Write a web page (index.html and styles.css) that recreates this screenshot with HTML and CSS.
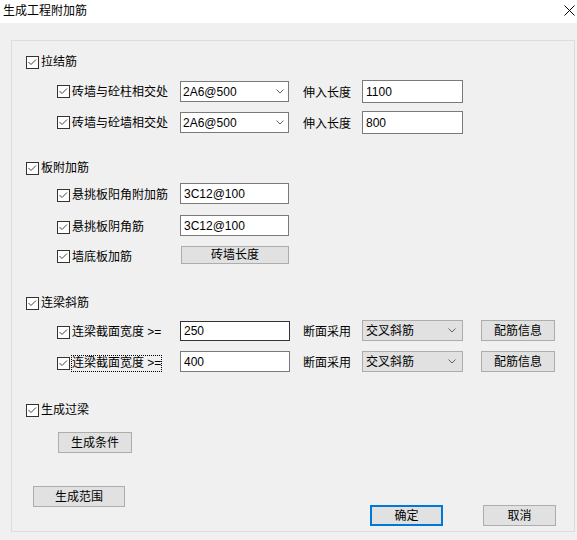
FILE: index.html
```html
<!DOCTYPE html>
<html lang="zh">
<head>
<meta charset="utf-8">
<title>生成工程附加筋</title>
<link rel="stylesheet" href="styles.css">
</head>
<body>
<div class="titlebar">
  <span class="title">生成工程附加筋</span>
  <svg class="close" width="11" height="11" viewBox="0 0 11 11"><path d="M0.5 0.5 L10.5 10.5 M10.5 0.5 L0.5 10.5" stroke="#000" stroke-width="1" fill="none"/></svg>
</div>
<div class="group">
  <div class="row l1 r-a">
    <label class="chk"><svg class="cb" width="13" height="13" viewBox="0 0 13 13"><rect x="0.5" y="0.5" width="12" height="12" fill="#fff" stroke="#333"/><path d="M2.5 6 L5 8.5 L10 3.5" fill="none" stroke="#444"/></svg>拉结筋</label>
  </div>
  <div class="row l2 r-b1 h23">
    <label class="chk col"><svg class="cb" width="13" height="13" viewBox="0 0 13 13"><rect x="0.5" y="0.5" width="12" height="12" fill="#fff" stroke="#333"/><path d="M2.5 6 L5 8.5 L10 3.5" fill="none" stroke="#444"/></svg>砖墙与砼柱相交处</label>
    <div class="combo edit w109"><span>2A6@500</span><svg class="chev" width="8" height="5" viewBox="0 0 8 5"><path d="M0.5 0.5 L4 4 L7.5 0.5" fill="none" stroke="#606060"/></svg></div>
    <span class="mid mid-b">伸入长度</span>
    <div class="input w101 tall">1100</div>
  </div>
  <div class="row l2 r-b2 h23">
    <label class="chk col"><svg class="cb" width="13" height="13" viewBox="0 0 13 13"><rect x="0.5" y="0.5" width="12" height="12" fill="#fff" stroke="#333"/><path d="M2.5 6 L5 8.5 L10 3.5" fill="none" stroke="#444"/></svg>砖墙与砼墙相交处</label>
    <div class="combo edit w109"><span>2A6@500</span><svg class="chev" width="8" height="5" viewBox="0 0 8 5"><path d="M0.5 0.5 L4 4 L7.5 0.5" fill="none" stroke="#606060"/></svg></div>
    <span class="mid mid-b">伸入长度</span>
    <div class="input w101 tall">800</div>
  </div>

  <div class="row l1 r-c">
    <label class="chk"><svg class="cb" width="13" height="13" viewBox="0 0 13 13"><rect x="0.5" y="0.5" width="12" height="12" fill="#fff" stroke="#333"/><path d="M2.5 6 L5 8.5 L10 3.5" fill="none" stroke="#444"/></svg>板附加筋</label>
  </div>
  <div class="row l2 r-d1 h21">
    <label class="chk col low"><svg class="cb" width="13" height="13" viewBox="0 0 13 13"><rect x="0.5" y="0.5" width="12" height="12" fill="#fff" stroke="#333"/><path d="M2.5 6 L5 8.5 L10 3.5" fill="none" stroke="#444"/></svg>悬挑板阳角附加筋</label>
    <div class="input w109">3C12@100</div>
  </div>
  <div class="row l2 r-d2 h21">
    <label class="chk col low"><svg class="cb" width="13" height="13" viewBox="0 0 13 13"><rect x="0.5" y="0.5" width="12" height="12" fill="#fff" stroke="#333"/><path d="M2.5 6 L5 8.5 L10 3.5" fill="none" stroke="#444"/></svg>悬挑板阴角筋</label>
    <div class="input w109">3C12@100</div>
  </div>
  <div class="row l2 r-d3 h18">
    <label class="chk col low"><svg class="cb" width="13" height="13" viewBox="0 0 13 13"><rect x="0.5" y="0.5" width="12" height="12" fill="#fff" stroke="#333"/><path d="M2.5 6 L5 8.5 L10 3.5" fill="none" stroke="#444"/></svg>墙底板加筋</label>
    <button class="btn wall-btn">砖墙长度</button>
  </div>

  <div class="row l1 r-e">
    <label class="chk"><svg class="cb" width="13" height="13" viewBox="0 0 13 13"><rect x="0.5" y="0.5" width="12" height="12" fill="#fff" stroke="#333"/><path d="M2.5 6 L5 8.5 L10 3.5" fill="none" stroke="#444"/></svg>连梁斜筋</label>
  </div>
  <div class="row l2 r-f1 h21">
    <label class="chk col low"><svg class="cb" width="13" height="13" viewBox="0 0 13 13"><rect x="0.5" y="0.5" width="12" height="12" fill="#fff" stroke="#333"/><path d="M2.5 6 L5 8.5 L10 3.5" fill="none" stroke="#444"/></svg><span>连梁截面宽度 &gt;=</span></label>
    <div class="input w110 hot">250</div>
    <span class="mid mid-f">断面采用</span>
    <div class="combo list w101"><span>交叉斜筋</span><svg class="chev" width="8" height="5" viewBox="0 0 8 5"><path d="M0.5 0.5 L4 4 L7.5 0.5" fill="none" stroke="#606060"/></svg></div>
    <button class="btn info-btn">配筋信息</button>
  </div>
  <div class="row l2 r-f2 h21">
    <label class="chk col low"><svg class="cb" width="13" height="13" viewBox="0 0 13 13"><rect x="0.5" y="0.5" width="12" height="12" fill="#fff" stroke="#333"/><path d="M2.5 6 L5 8.5 L10 3.5" fill="none" stroke="#444"/></svg><span class="focus">连梁截面宽度 &gt;=</span></label>
    <div class="input w110">400</div>
    <span class="mid mid-f">断面采用</span>
    <div class="combo list w101"><span>交叉斜筋</span><svg class="chev" width="8" height="5" viewBox="0 0 8 5"><path d="M0.5 0.5 L4 4 L7.5 0.5" fill="none" stroke="#606060"/></svg></div>
    <button class="btn info-btn">配筋信息</button>
  </div>

  <div class="row l1 r-g">
    <label class="chk"><svg class="cb" width="13" height="13" viewBox="0 0 13 13"><rect x="0.5" y="0.5" width="12" height="12" fill="#fff" stroke="#333"/><path d="M2.5 6 L5 8.5 L10 3.5" fill="none" stroke="#444"/></svg>生成过梁</label>
  </div>
  <div class="row r-h h21">
    <button class="btn cond-btn">生成条件</button>
  </div>

  <div class="bottom">
    <button class="btn range-btn">生成范围</button>
    <div class="actions">
      <button class="btn ok-btn">确定</button>
      <button class="btn cancel-btn">取消</button>
    </div>
  </div>
</div>
</body>
</html>
```

FILE: styles.css
```css
html, body {
  margin: 0;
  padding: 0;
}
body {
  width: 577px;
  height: 540px;
  overflow: hidden;
  background: #f0f0f0;
  font-family: "Liberation Sans", "Noto Sans CJK SC", sans-serif;
  font-size: 12px;
  color: #000;
}
.titlebar {
  height: 23px;
  background: #fff;
  display: flex;
  align-items: center;
  justify-content: space-between;
  padding: 0 2px 2px 3px;
  box-sizing: border-box;
}
.title {
  font-size: 12px;
  line-height: 14px;
}
.close {
  display: block;
  margin-right: 0;
}
.group {
  box-sizing: border-box;
  margin: 17px 0 0 11px;
  width: 564px;
  height: 492px;
  border: 1px solid #dcdcdc;
  padding-top: 10px;
}
.row {
  display: flex;
  align-items: center;
  height: 22px;
}
.h23 { height: 23px; }
.h21 { height: 21px; }
.h18 { height: 18px; }
.l1 { padding-left: 14px; }
.l2 { padding-left: 45px; }
.r-b1 { margin-top: 7px; }
.r-b2 { margin-top: 8px; }
.r-c { margin-top: 23px; }
.r-d1 { margin-top: 4px; }
.r-d2 { margin-top: 11px; }
.r-d3 { margin-top: 10px; }
.r-e { margin-top: 28px; }
.r-f1 { margin-top: 6px; }
.r-f2 { margin-top: 10px; }
.r-g { margin-top: 27px; }
.r-h { margin-top: 11px; padding-left: 46px; }

.chk {
  display: flex;
  align-items: center;
  white-space: nowrap;
  line-height: 14px;
}
.chk.col { width: 123px; }
.chk.low { margin-top: 3px; }
.cb {
  display: block;
  flex: none;
  margin-right: 2px;
}
.focus {
  outline: 1px dotted #000;
  line-height: 15px;
}

.combo, .input {
  box-sizing: border-box;
  display: flex;
  align-items: center;
  height: 21px;
  line-height: 14px;
}
.combo {
  justify-content: space-between;
}
.combo.edit {
  background: #fff;
  border: 1px solid #7a7a7a;
  padding: 0 4px 0 2px;
}
.combo.list {
  background: #e1e1e1;
  border: 1px solid #adadad;
  padding: 0 6px 0 3px;
}
.chev { display: block; }
.input {
  background: #fff;
  border: 1px solid #7a7a7a;
  padding-left: 3px;
  color: #000;
}
.input.tall { height: 23px; }
.input.hot { border-color: #333; height: 20px; }
.w109 { width: 109px; }
.w110 { width: 110px; }
.w101 { width: 101px; }

.mid {
  box-sizing: border-box;
  white-space: nowrap;
}
.mid-b { width: 73px; padding-left: 14px; }
.mid-f { width: 72px; padding-left: 13px; }

.btn {
  box-sizing: border-box;
  margin: 0;
  padding: 0;
  background: #e1e1e1;
  border: 1px solid #adadad;
  font-family: "Liberation Sans", "Noto Sans CJK SC", sans-serif;
  font-size: 12px;
  line-height: 14px;
  color: #000;
  height: 21px;
}
.wall-btn { width: 108px; height: 18px; margin-left: 1px; }
.info-btn { width: 74px; margin-left: 18px; }
.cond-btn { width: 74px; }
.range-btn { width: 92px; }
.ok-btn { width: 73px; border: 2px solid #0078d7; }
.cancel-btn { width: 73px; }

.bottom {
  display: flex;
  margin-top: 33px;
  padding-left: 21px;
  align-items: flex-start;
}
.actions {
  display: flex;
  margin-top: 19px;
  margin-left: 245px;
  gap: 40px;
}
```
